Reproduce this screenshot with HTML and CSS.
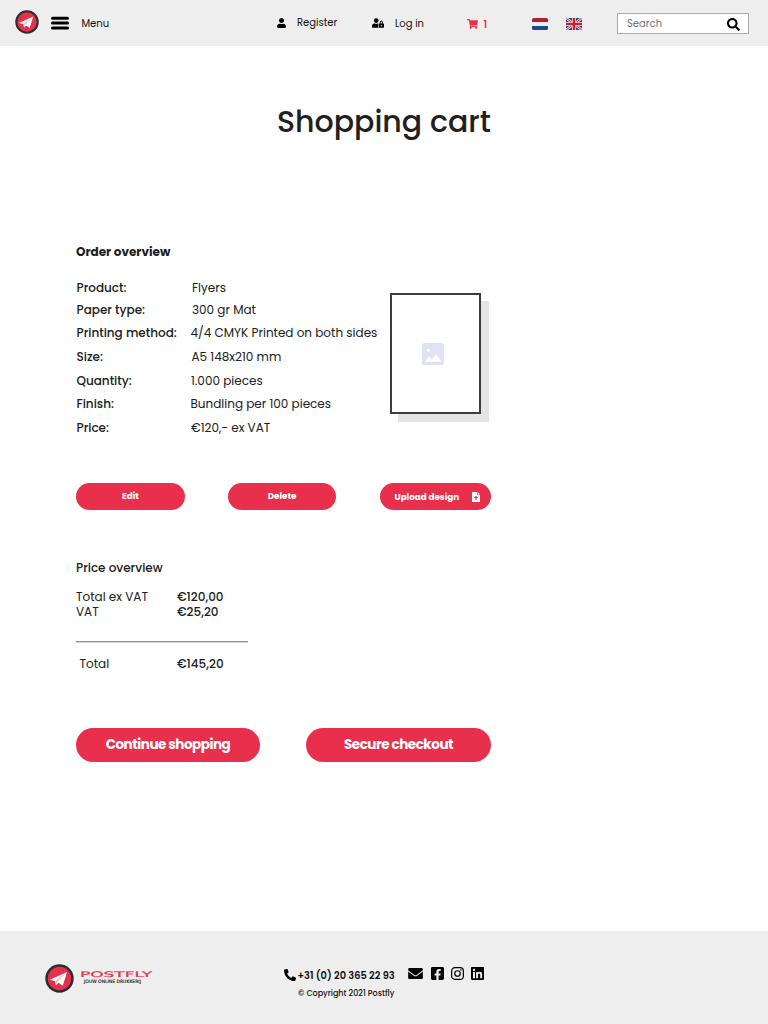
FILE: index.html
```html
<!DOCTYPE html>
<html lang="en">
<head>
<meta charset="utf-8">
<title>Postfly – Shopping cart</title>
<link rel="stylesheet" href="styles.css">
</head>
<body>
<svg class="defs" width="0" height="0">
  <symbol id="badge" viewBox="0 0 30 30">
    <circle cx="15" cy="15" r="14.7" fill="#2b2e30"/>
    <circle cx="15" cy="15" r="12.1" fill="#e8304c"/>
    <path d="M4.800 16.400 22.800 8.200 18.400 22.400 14 19.300 11.300 22 10.600 17.600z" fill="#fff"/>
    <path d="M10.600 17.600 22.800 8.200 12.600 18.500 11.300 22z" fill="#c9c9cc"/>
  </symbol>
</svg>
<header class="topbar">
  <svg class="brand"><use href="#badge"/></svg>
  <svg class="burger" viewBox="0 0 18 14"><path d="M1.500 2.200h15M1.500 7.100h15M1.500 12h15" stroke="#000" stroke-width="3" stroke-linecap="round"/></svg>
  <a class="nav menu">Menu</a>
  <svg class="user" viewBox="0 0 448 512"><path d="M224 256c70.700 0 128-57.300 128-128S294.700 0 224 0 96 57.300 96 128s57.300 128 128 128zm89.600 32h-16.700c-22.200 10.200-46.900 16-72.900 16s-50.600-5.800-72.900-16h-16.700C60.200 288 0 348.200 0 422.400V464c0 26.500 21.500 48 48 48h352c26.500 0 48-21.500 48-48v-41.600c0-74.200-60.200-134.400-134.400-134.400z"/></svg>
  <a class="nav register">Register</a>
  <svg class="lock" viewBox="0 0 640 512"><path d="M224 256A128 128 0 1 0 96 128a128 128 0 0 0 128 128zm96 64a63.080 63.080 0 0 1 8.100-30.500c-4.800-.5-9.500-1.500-14.500-1.500h-16.700a174.080 174.080 0 0 1-145.800 0h-16.700A134.430 134.430 0 0 0 0 422.400V464a48 48 0 0 0 48 48h280.900a63.540 63.540 0 0 1-8.900-32zm288-32h-32v-80a80 80 0 0 0-160 0v80h-32a32 32 0 0 0-32 32v160a32 32 0 0 0 32 32h224a32 32 0 0 0 32-32V320a32 32 0 0 0-32-32zM496 432a32 32 0 1 1 32-32 32 32 0 0 1-32 32zm32-144h-64v-80a32 32 0 0 1 64 0z"/></svg>
  <a class="nav login">Log in</a>
  <svg class="cart" viewBox="0 0 576 512"><path d="M528.120 301.319l47.273-208C578.806 78.301 567.391 64 551.990 64H159.208l-9.166-44.810C147.758 8.021 137.930 0 126.529 0H24C10.745 0 0 10.745 0 24v16c0 13.255 10.745 24 24 24h69.883l70.248 343.435C147.325 417.100 136 435.222 136 456c0 30.928 25.072 56 56 56s56-25.072 56-56c0-15.674-6.447-29.835-16.824-40h209.647C430.447 426.165 424 440.326 424 456c0 30.928 25.072 56 56 56s56-25.072 56-56c0-22.172-12.888-41.332-31.579-50.405l5.517-24.276c3.413-15.018-8.002-29.319-23.403-29.319H218.117l-6.545-32h293.145c11.206 0 20.920-7.754 23.403-18.681z"/></svg>
  <span class="nav count">1</span>
  <svg class="flag nl" viewBox="0 0 16 12"><rect width="16" height="12" rx="1.6" fill="#eee"/><path d="M0 4V1.600Q0 0 1.600 0h12.800Q16 0 16 1.600V4z" fill="#ae1f2d"/><path d="M0 8v2.400Q0 12 1.600 12h12.800q1.600 0 1.600-1.600V8z" fill="#21468b"/></svg>
  <svg class="flag uk" viewBox="0 0 16 12"><clipPath id="r"><rect width="16" height="12" rx="1.600"/></clipPath><g clip-path="url(#r)"><rect width="16" height="12" fill="#2a4a8e"/><path d="M0 0 16 12M16 0 0 12" stroke="#eee" stroke-width="2.400"/><path d="M0 0 16 12M16 0 0 12" stroke="#d0283f" stroke-width="1"/><path d="M8 0v12M0 6h16" stroke="#eee" stroke-width="3.800"/><path d="M8 0v12M0 6h16" stroke="#d0202f" stroke-width="2.400"/></g></svg>
  <div class="search"><span class="nav hint">Search</span>
    <svg class="glass" viewBox="0 0 512 512"><path d="M505 442.700L405.300 343c-4.500-4.500-10.600-7-17-7H372c27.600-35.300 44-79.700 44-128C416 93.100 322.900 0 208 0S0 93.100 0 208s93.100 208 208 208c48.300 0 92.700-16.400 128-44v16.300c0 6.400 2.500 12.500 7 17l99.700 99.700c9.400 9.400 24.600 9.400 33.900 0l28.300-28.300c9.400-9.400 9.400-24.600.1-34zM208 336c-70.700 0-128-57.200-128-128 0-70.700 57.200-128 128-128 70.700 0 128 57.200 128 128 0 70.700-57.200 128-128 128z"/></svg>
  </div>
</header>
<main>
  <h1>Shopping cart</h1>
  <section class="order">
    <div class="details">
      <h2>Order overview</h2>
      <dl>
        <dt class="k1">Product:</dt><dd class="v1">Flyers</dd>
        <dt class="k2">Paper type:</dt><dd class="v2">300 gr Mat</dd>
        <dt class="k3">Printing method:</dt><dd class="v3">4/4 CMYK Printed on both sides</dd>
        <dt class="k4">Size:</dt><dd class="v4">A5 148x210 mm</dd>
        <dt class="k5">Quantity:</dt><dd class="v5">1.000 pieces</dd>
        <dt class="k6">Finish:</dt><dd class="v6">Bundling per 100 pieces</dd>
        <dt class="k7">Price:</dt><dd class="v7">€120,- ex VAT</dd>
      </dl>
    </div>
    <div class="preview"><svg viewBox="0 0 22 22"><path fill="#dfe3f3" fill-rule="evenodd" d="M2 0h18a2 2 0 0 1 2 2v18a2 2 0 0 1-2 2H2a2 2 0 0 1-2-2V2a2 2 0 0 1 2-2zM6.200 5.700a1.600 1.600 0 1 0 0 3.200 1.600 1.600 0 0 0 0-3.200zM2.800 18.700h16.600l-5.200-7.600-4.400 5.300-2.700-3.200z"/></svg></div>
  </section>
  <div class="actions">
    <a class="btn edit"><span>Edit</span></a>
    <a class="btn delete"><span>Delete</span></a>
    <a class="btn upload"><span>Upload design</span><svg viewBox="0 0 8 10"><path fill="#fff" fill-rule="evenodd" d="M.6 0H5v3h3v6.400a.6.600 0 0 1-.6.600H.6a.6.600 0 0 1-.6-.6V.6A.6.600 0 0 1 .6 0zM4 3.800 1.800 6h1.600v2h1.200V6h1.600z"/><path fill="#fff" d="M5.600 0 8 2.400H5.600z"/></svg></a>
  </div>
  <section class="prices">
    <h3>Price overview</h3>
    <div class="sum first"><span class="exvat">Total ex VAT</span><b class="p1">€120,00</b></div>
    <div class="sum"><span class="vat">VAT</span><b class="p2">€25,20</b></div>
    <hr>
    <div class="sum total"><span>Total</span><b class="p1">€145,20</b></div>
  </section>
  <div class="checkout">
    <a class="btn big go"><span>Continue shopping</span></a>
    <a class="btn big pay"><span>Secure checkout</span></a>
  </div>
</main>
<footer>
  <svg class="mark"><use href="#badge"/></svg>
  <svg class="wordmark" viewBox="0 0 74 20">
    <text class="name" x="1" y="7.800" textLength="72" lengthAdjust="spacingAndGlyphs">POSTFLY</text>
    <text class="tag" x="5" y="14" textLength="57" lengthAdjust="spacingAndGlyphs">JOUW ONLINE DRUKKERIJ</text>
  </svg>
  <div class="contact">
    <div class="tel"><svg viewBox="0 0 512 512"><path d="M497.390 361.800l-112-48a24 24 0 0 0-28 6.900l-49.600 60.600A370.660 370.660 0 0 1 130.600 204.110l60.600-49.600a23.940 23.940 0 0 0 6.900-28l-48-112A24.160 24.160 0 0 0 122.600.61l-104 24A24 24 0 0 0 0 48c0 256.500 207.900 464 464 464a24 24 0 0 0 23.400-18.600l24-104a24.290 24.290 0 0 0-14.010-27.600z"/></svg><span>+31 (0) 20 365 22 93</span></div>
    <div class="copy">© Copyright 2021 Postfly</div>
  </div>
  <div class="social">
    <svg class="mail" viewBox="0 64 512 384"><path d="M502.300 190.800c3.900-3.100 9.700-.2 9.700 4.700V400c0 26.500-21.500 48-48 48H48c-26.500 0-48-21.500-48-48V195.600c0-5 5.700-7.800 9.700-4.700 22.400 17.400 52.100 39.500 154.100 113.600 21.100 15.400 56.700 47.800 92.200 47.600 35.700.3 72-32.800 92.300-47.600 102-74.100 131.600-96.300 154-113.700zM256 320c23.200.4 56.600-29.200 73.400-41.400 132.700-96.300 142.800-104.700 173.400-128.700 5.800-4.500 9.200-11.500 9.200-18.900v-19c0-26.500-21.500-48-48-48H48c-26.500 0-48 21.500-48 48v19c0 7.400 3.400 14.300 9.200 18.900 30.600 23.900 40.700 32.400 173.400 128.700 16.800 12.200 50.200 41.800 73.400 41.400z"/></svg>
    <svg viewBox="0 32 448 448"><path d="M400 32H48A48 48 0 0 0 0 80v352a48 48 0 0 0 48 48h137.250V327.690h-63V256h63v-54.640c0-62.150 37-96.480 93.670-96.480 27.140 0 55.520 4.840 55.520 4.840v61h-31.270c-30.810 0-40.420 19.120-40.420 38.730V256h68.780l-11 71.690h-57.780V480H400a48 48 0 0 0 48-48V80a48 48 0 0 0-48-48z"/></svg>
    <svg viewBox="0 0 13 13"><rect x=".65" y=".65" width="11.700" height="11.700" rx="3.200" fill="none" stroke="#000" stroke-width="1.200"/><circle cx="6.500" cy="6.500" r="2.750" fill="none" stroke="#000" stroke-width="1.200"/><circle cx="9.950" cy="3.050" r=".8"/></svg>
    <svg viewBox="0 32 448 448"><path d="M416 32H31.900C14.300 32 0 46.500 0 64.300v383.400C0 465.500 14.300 480 31.900 480H416c17.600 0 32-14.500 32-32.300V64.300c0-17.800-14.400-32.300-32-32.300zM135.400 416H69V202.200h66.500V416zm-33.200-243c-21.300 0-38.500-17.300-38.500-38.500S80.900 96 102.200 96c21.200 0 38.500 17.300 38.500 38.500 0 21.300-17.200 38.500-38.500 38.500zm282.100 243h-66.400V312c0-24.800-.5-56.700-34.500-56.700-34.600 0-39.900 27-39.900 54.900V416h-66.400V202.200h63.700v29.200h.9c8.900-16.800 30.600-34.500 62.900-34.500 67.200 0 79.700 44.300 79.700 101.900V416z"/></svg>
  </div>
</footer>
</body>
</html>
```
FILE: styles.css
```css
* { box-sizing: border-box; }
body {
  margin: 0;
  height: 1024px;
  display: flex;
  flex-direction: column;
  background: #fff;
  color: #202021;
  font: 400 12px/16px Poppins, Inter, sans-serif;
  white-space: nowrap;
}
svg { display: block; flex: none; }
.defs { position: absolute; }
h1, h2, h3, dl, dd { margin: 0; }

.topbar { display: flex; align-items: flex-start; height: 46px; background: #eee; flex: none; }
.nav { font-size: 10px; line-height: 14px; color: #111; flex: none; }
.brand { width: 24px; height: 24px; margin: 10px 0 0 15px; }
.burger { width: 18px; height: 14px; margin: 16px 0 0 12px; }
.menu { width: 195.500px; margin: 17px 0 0 12.500px; }
.user { width: 9px; height: 10px; margin: 18px 0 0 0; }
.register { width: 75px; margin: 16px 0 0 11px; }
.lock { width: 12px; height: 10px; margin-top: 18px; }
.login { width: 72px; margin: 17px 0 0 11px; }
.cart { width: 11px; height: 10px; margin: 19px 0 0 0; fill: #e8304c; }
.count { width: 48.500px; margin: 18px 0 0 5.500px; font-weight: 600; color: #e8304c; }
.flag { width: 16px; height: 12px; margin-top: 18px; }
.uk { margin-left: 18px; }
.search {
  display: flex;
  justify-content: space-between;
  width: 132px;
  height: 21px;
  margin: 13px 0 0 35px;
  padding: 2px 8px 0 9px;
  background: #fff;
  border: 1px solid #aaa;
}
.hint { margin-top: 1px; color: #757575; }
.glass { width: 13px; height: 13px; margin-top: 2px; }

main { flex: 1; padding-left: 76px; }
h1 { width: 415px; margin-top: 56px; padding-left: 201px; font-size: 30px; line-height: 40px; font-weight: 500; }
.order { display: flex; margin-top: 102px; height: 197px; }
.details { width: 314px; }
h2 { font-size: 12px; line-height: 16px; font-weight: 700; margin-bottom: 17px; }
dl {
  display: grid;
  grid-template-columns: 114.500px 1fr;
  grid-template-rows: 22px 22px 24px 24px 24px 22px 26px;
  align-items: center;
}
dt { font-weight: 500; padding-left: .5px; }
.v1, .v2 { padding-left: 1.500px; }
.v4 { padding-left: 1px; }
.v5, .v7 { padding-left: .5px; }
.preview {
  display: flex;
  align-items: center;
  justify-content: center;
  width: 91px;
  height: 121px;
  margin-top: 49px;
  padding: 1px 5px 0 0;
  border: 2px solid #3d3d3d;
  background: #fff;
  box-shadow: 8px 8px 0 #e4e4e4;
}
.preview svg { width: 22px; height: 22px; }

.btn { display: flex; align-items: center; justify-content: center; height: 27px; border-radius: 17px; background: #e8304c; color: #fff; font-size: 8.750px; font-weight: 700; }
.actions { display: flex; margin-top: 42px; }
.edit { width: 109px; padding-bottom: 1px; }
.delete { width: 108px; margin-left: 43px; padding-bottom: 1px; }
.upload { width: 111px; margin-left: 44px; padding-left: 14.500px; justify-content: flex-start; }
.upload span { width: 77px; }
.upload svg { width: 8px; height: 10px; margin-top: 1px; }

.prices { width: 172px; margin-top: 50px; }
h3 { font-size: 12px; line-height: 16px; font-weight: 500; }
.sum { display: flex; height: 15px; line-height: 15px; }
.sum span { width: 101px; }
.sum b { font-weight: 500; }
.first { margin-top: 13px; }
hr { height: 1px; margin: 22px 0 0; border: 0; background: #8f8f8f; box-shadow: 0 1px #d8d8d8; }
.total { margin-top: 14px; }
.total span { padding-left: 3.500px; }

.checkout { display: flex; gap: 46px; margin-top: 57px; }
.big { height: 34px; font-size: 13.500px; letter-spacing: -.47px; }
.go { width: 184px; }
.pay { width: 185px; }

footer { display: flex; align-items: flex-start; height: 93px; padding: 33px 0 0 45px; background: #eee; flex: none; color: #111; }
.mark { width: 29px; height: 29px; }
.wordmark { width: 74px; height: 20px; margin: 5px 0 0 5px; }
.name { font: 400 7.600px "DejaVu Sans", sans-serif; fill: #e8304c; stroke: #e8304c; stroke-width: .2px; }
.tag { font: 400 4.600px "DejaVu Sans", sans-serif; fill: #111; stroke: #111; stroke-width: .12px; }
.contact { width: 124px; margin: 4px 0 0 131px; }
.tel { display: flex; height: 14px; font-size: 9.800px; line-height: 16px; font-weight: 600; }
.tel svg { width: 12px; height: 12px; margin: 1px 1.500px 0 0; }
.copy { margin-top: 6px; padding-left: 14px; font-size: 8px; line-height: 12px; font-weight: 500; }
.social { display: flex; margin-top: 3px; gap: 7px; }
.social svg { width: 13px; height: 13px; }
.social .mail { width: 15px; height: 11px; margin: 1px 1px 0 0; }
```
